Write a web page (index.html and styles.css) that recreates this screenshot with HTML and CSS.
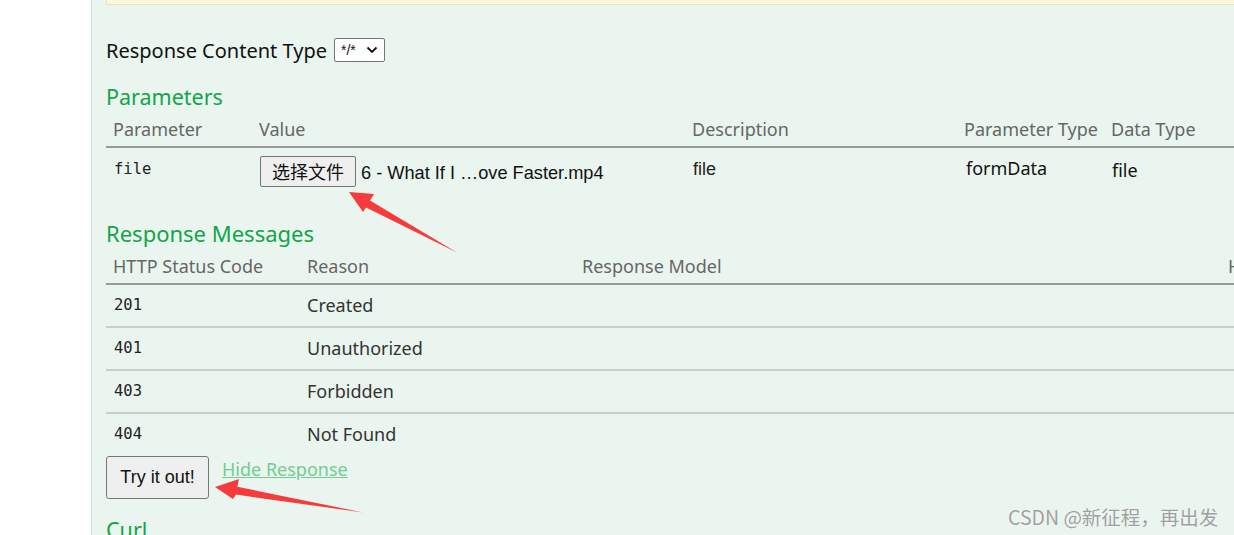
FILE: index.html
```html
<!DOCTYPE html>
<html>
<head>
<meta charset="utf-8">
<link rel="stylesheet" href="styles.css">
</head>
<body>
<div class="page">
  <div class="gutter"></div>
  <div class="panel">
    <div class="notice"></div>
    <div class="ctype">
      <span class="ctype-label">Response Content Type</span>
      <span class="select">*/*<svg class="chev" width="12" height="8" viewBox="0 0 12 8"><path d="M1.5 1.5 L6 6 L10.5 1.5" fill="none" stroke="#111" stroke-width="1.8"/></svg></span>
    </div>
    <h4 class="sec sec-params">Parameters</h4>
    <table class="grid params">
      <colgroup><col class="c1"><col class="c2"><col class="c3"><col class="c4"><col class="c5"></colgroup>
      <thead><tr><th>Parameter</th><th>Value</th><th>Description</th><th>Parameter Type</th><th>Data Type</th></tr></thead>
      <tbody><tr>
        <td class="mono">file</td>
        <td><span class="filebtn">选择文件</span><span class="fname">6 - What If I …ove Faster.mp4</span></td>
        <td class="desc">file</td>
        <td class="ptype">formData</td>
        <td class="dtype">file</td>
      </tr></tbody>
    </table>
    <h4 class="sec sec-resp">Response Messages</h4>
    <table class="grid resp">
      <colgroup><col class="r1"><col class="r2"><col class="r3"><col class="r4"></colgroup>
      <thead><tr><th>HTTP Status Code</th><th>Reason</th><th>Response Model</th><th>Headers</th></tr></thead>
      <tbody>
        <tr><td class="mono">201</td><td>Created</td><td></td><td></td></tr>
        <tr><td class="mono">401</td><td>Unauthorized</td><td></td><td></td></tr>
        <tr><td class="mono">403</td><td>Forbidden</td><td></td><td></td></tr>
        <tr class="last"><td class="mono">404</td><td>Not Found</td><td></td><td></td></tr>
      </tbody>
    </table>
    <div class="actions">
      <button class="try">Try it out!</button>
      <a class="hide" href="#">Hide Response</a>
    </div>
    <h4 class="sec sec-curl">Curl</h4>
  </div>
</div>
<svg class="arrows" width="1234" height="535" viewBox="0 0 1234 535">
  <polygon points="349,192 374,194 370,200.5 457,252.5 366,207.5 363,212" fill="#f53b3b"/>
  <polygon points="215,487 239,479 237.4,486.8 363,512.5 236,494.6 233,499" fill="#f53b3b"/>
</svg>
<div class="watermark">CSDN @新征程，再出发</div>
</body>
</html>
```

FILE: styles.css
```css
html, body {
  margin: 0;
  padding: 0;
  width: 1234px;
  height: 535px;
  overflow: hidden;
  background: #fff;
  font-family: "Noto Sans", "Noto Sans CJK SC", sans-serif;
}
.page {
  display: flex;
  width: 1234px;
  height: 535px;
  position: relative;
  overflow: hidden;
}
.gutter {
  width: 91px;
  flex: none;
}
.panel {
  flex: none;
  width: 1400px;
  height: 535px;
  background: #ebf5ef;
  border-left: 1px solid #c9e4d5;
  padding-left: 14px;
  box-sizing: border-box;
}
.notice {
  height: 4px;
  background: #fcf6db;
  border: 1px solid #e5e0c6;
  border-top: none;
  width: 1400px;
}
.ctype {
  display: flex;
  align-items: center;
  gap: 7px;
  margin-top: 32px;
  height: 26px;
}
.ctype-label {
  font-size: 20px;
  color: #111;
}
.select {
  display: inline-flex;
  align-items: center;
  justify-content: space-between;
  width: 51px;
  height: 24px;
  box-sizing: border-box;
  padding: 0 6px 0 6px;
  border: 1px solid #767676;
  border-radius: 2px;
  background: #fff;
  font-family: "Liberation Sans", sans-serif;
  font-size: 14px;
  color: #111;
}
.sec {
  margin: 0;
  font-weight: normal;
  color: #10a54a;
  font-size: 21.5px;
  line-height: 30px;
}
.sec-resp { font-size: 22px; }
.sec-params { margin-top: 19px; }
.sec-resp { margin-top: 11px; }
.sec-curl { margin-top: 16px; }
.grid {
  border-collapse: collapse;
  table-layout: fixed;
}
.params { width: 1250px; }
.resp { width: 1300px; }
col.c1 { width: 146px; }
col.c2 { width: 433px; }
col.c3 { width: 272px; }
col.c4 { width: 147px; }
col.c5 { width: 252px; }
col.r1 { width: 194px; }
col.r2 { width: 275px; }
col.r3 { width: 646px; }
col.r4 { width: 185px; }
.grid th {
  text-align: left;
  font-weight: normal;
  font-size: 18px;
  color: #666;
  padding: 0 7px;
  height: 34px;
  vertical-align: middle;
  border-bottom: 2px solid #999;
  white-space: nowrap;
  overflow: hidden;
}
.resp th { height: 35px; }
.grid td {
  padding: 0 7px;
  font-size: 18px;
  color: #333;
  white-space: nowrap;
}
.params td {
  height: 60px;
  vertical-align: top;
  padding-top: 8px;
  box-sizing: border-box;
}
.params td.mono { padding-top: 12px; padding-left: 8px; }
.mono {
  font-family: "DejaVu Sans Mono", monospace;
  font-size: 15.5px !important;
  color: #222 !important;
}
.filebtn {
  display: inline-block;
  height: 31px;
  box-sizing: border-box;
  margin-left: 1px;
  padding: 0 11px;
  border: 1px solid #767676;
  border-radius: 2px;
  background: #efefef;
  font-family: "Noto Sans CJK SC", sans-serif;
  font-size: 18px;
  line-height: 29px;
  color: #111;
  vertical-align: top;
}
.fname {
  display: inline-block;
  margin-left: 5px;
  font-family: "Liberation Sans", sans-serif;
  font-size: 18.2px;
  color: #111;
  line-height: 33px;
  padding-top: 1px;
  vertical-align: top;
}
.params td.desc {
  font-family: "Liberation Sans", sans-serif;
  font-size: 18px;
  color: #222;
  padding-top: 11px;
  padding-left: 8px;
}
.params td.ptype { color: #111; padding-top: 8px; padding-left: 9px; }
.params td.dtype { color: #111; padding-top: 10px; padding-left: 8px; }
.resp td {
  height: 39px;
  padding-bottom: 2px;
  border-bottom: 2px solid #ccc;
  vertical-align: middle;
}
.resp td.mono { padding-left: 8px; }
.resp tr.last td {
  border-bottom: none;
  height: 40px;
}
.actions {
  display: flex;
  align-items: flex-start;
  gap: 13px;
  margin-top: 0;
}
.try {
  width: 103px;
  height: 43px;
  margin: 0;
  padding: 0;
  border: 1px solid #767676;
  border-radius: 3px;
  background: #efefef;
  font-family: "Liberation Sans", sans-serif;
  font-size: 18px;
  color: #111;
}
.hide {
  font-size: 18px;
  color: #70cd8f;
  text-decoration: underline;
  line-height: 26px;
}
.arrows {
  position: absolute;
  left: 0;
  top: 0;
  pointer-events: none;
}
.watermark {
  position: absolute;
  left: 1008px;
  top: 502px;
  font-family: "Noto Sans CJK SC", sans-serif;
  font-size: 19.5px;
  color: #a0a0a0;
  text-shadow: 0 0 1px #fff;
  white-space: nowrap;
}
```
